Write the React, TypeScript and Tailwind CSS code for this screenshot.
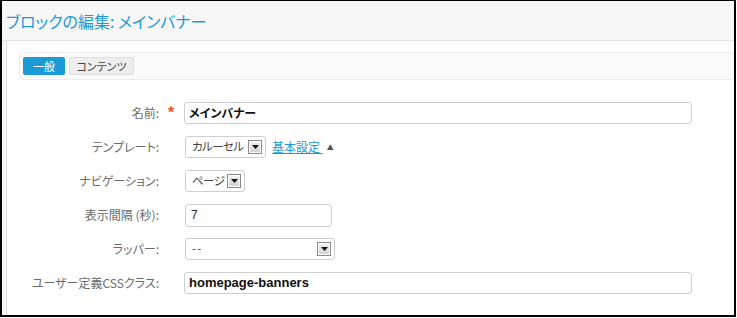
import React from 'react';

const jp = '[font-family:"Noto_Sans_CJK_JP",sans-serif]';

function SelectArrow() {
  return (
    <span className="flex h-[14px] w-[14px] shrink-0 items-center justify-center border border-[#8a8a8a] bg-gradient-to-b from-[#f4f4f4] to-[#cfcfcf] shadow-[inset_0_0_0_1px_#fff]">
      <svg width="7" height="4" viewBox="0 0 7 4">
        <path d="M0 0h7L3.5 4z" fill="#111" />
      </svg>
    </span>
  );
}

function Select({ value, width }: { value: string; width: string }) {
  return (
    <div className={`flex h-[22px] ${width} items-center justify-between rounded-[3px] border border-[#cfcfcf] bg-white pl-[6px] pr-[3px] text-[11.5px] text-[#444]`}>
      <span className="whitespace-nowrap tracking-[-0.6px] [font-feature-settings:'palt']">{value}</span>
      <SelectArrow />
    </div>
  );
}

function Row({ label, required, children }: { label: string; required?: boolean; children: React.ReactNode }) {
  return (
    <div className="flex h-[22px] items-center">
      <div className="w-[152px] whitespace-nowrap text-right text-[12px] text-[#6a6a6a] [font-feature-settings:'palt']">{label}</div>
      <div className="flex w-[25px] justify-center pr-[1px]">
        {required && <span className="mt-[-2px] text-[16px] font-bold text-[#f15a22]">*</span>}
      </div>
      {children}
    </div>
  );
}

export default function App() {
  return (
    <div className={`h-[318px] w-[737px] ${jp}`}>
      <div className="flex h-[317px] w-[736px] flex-col overflow-hidden border-2 border-t border-black bg-[#f7f7f7]">
        <div className="flex h-[40px] shrink-0 items-center border-b border-[#e2e2e2] pl-[4px]">
          <h1 className="text-[16px] text-[#1b9ad6] [font-feature-settings:'palt']">ブロックの編集: メインバナー</h1>
        </div>

        <div className="ml-[4px] flex-1 rounded-tl-[4px] border-l border-[#dcdcdc] bg-white pl-[12px] pt-[11px]">
          <div className="flex h-[28px] items-center gap-[4px] rounded-l-[4px] border border-r-0 border-[#eee] bg-[#fafafa] pl-[3px]">
            <button className="h-[18px] w-[42px] rounded-[2px] bg-[#1b9ad6] text-[11px] leading-[18px] text-white">一般</button>
            <button className="h-[18px] w-[65px] rounded-[2px] border border-[#ddd] bg-[#eee] text-[11px] leading-[16px] text-[#444] [font-feature-settings:'palt']">コンテンツ</button>
          </div>

          <div className="-ml-[12px] mt-[22px] flex flex-col gap-[12px]">
            <Row label="名前:" required>
              <div className="flex h-[22px] w-[508px] items-center rounded-[3px] border border-[#cfcfcf] pl-[4px] text-[12px] font-bold text-[#111] [font-feature-settings:'palt']">
                メインバナー
              </div>
            </Row>
            <Row label="テンプレート:">
              <div className="ml-[1px] flex items-center">
                <Select value="カルーセル" width="w-[81px]" />
                <a className="ml-[6px] whitespace-pre text-[12px] text-[#1b9ad6] underline [font-feature-settings:'palt']">基本設定 </a>
                <span className="ml-[4px] text-[7px] text-[#555]">▲</span>
              </div>
            </Row>
            <Row label="ナビゲーション:">
              <div className="ml-[1px]">
                <Select value="ページ" width="w-[60px]" />
              </div>
            </Row>
            <Row label="表示間隔 (秒):">
              <div className="ml-[1px] flex h-[23px] w-[147px] items-center rounded-[3px] border border-[#cfcfcf] pl-[5px] text-[12px] text-[#222] [font-family:'Liberation_Sans',sans-serif]">
                7
              </div>
            </Row>
            <Row label="ラッパー:">
              <div className="ml-[1px]">
                <Select value="- -" width="w-[150px]" />
              </div>
            </Row>
            <Row label="ユーザー定義CSSクラス:">
              <div className="flex h-[22px] w-[508px] items-center rounded-[3px] border border-[#cfcfcf] pl-[4px] text-[13px] font-bold text-[#111] [font-family:'Liberation_Sans',sans-serif]">
                homepage-banners
              </div>
            </Row>
          </div>
        </div>
      </div>
    </div>
  );
}
